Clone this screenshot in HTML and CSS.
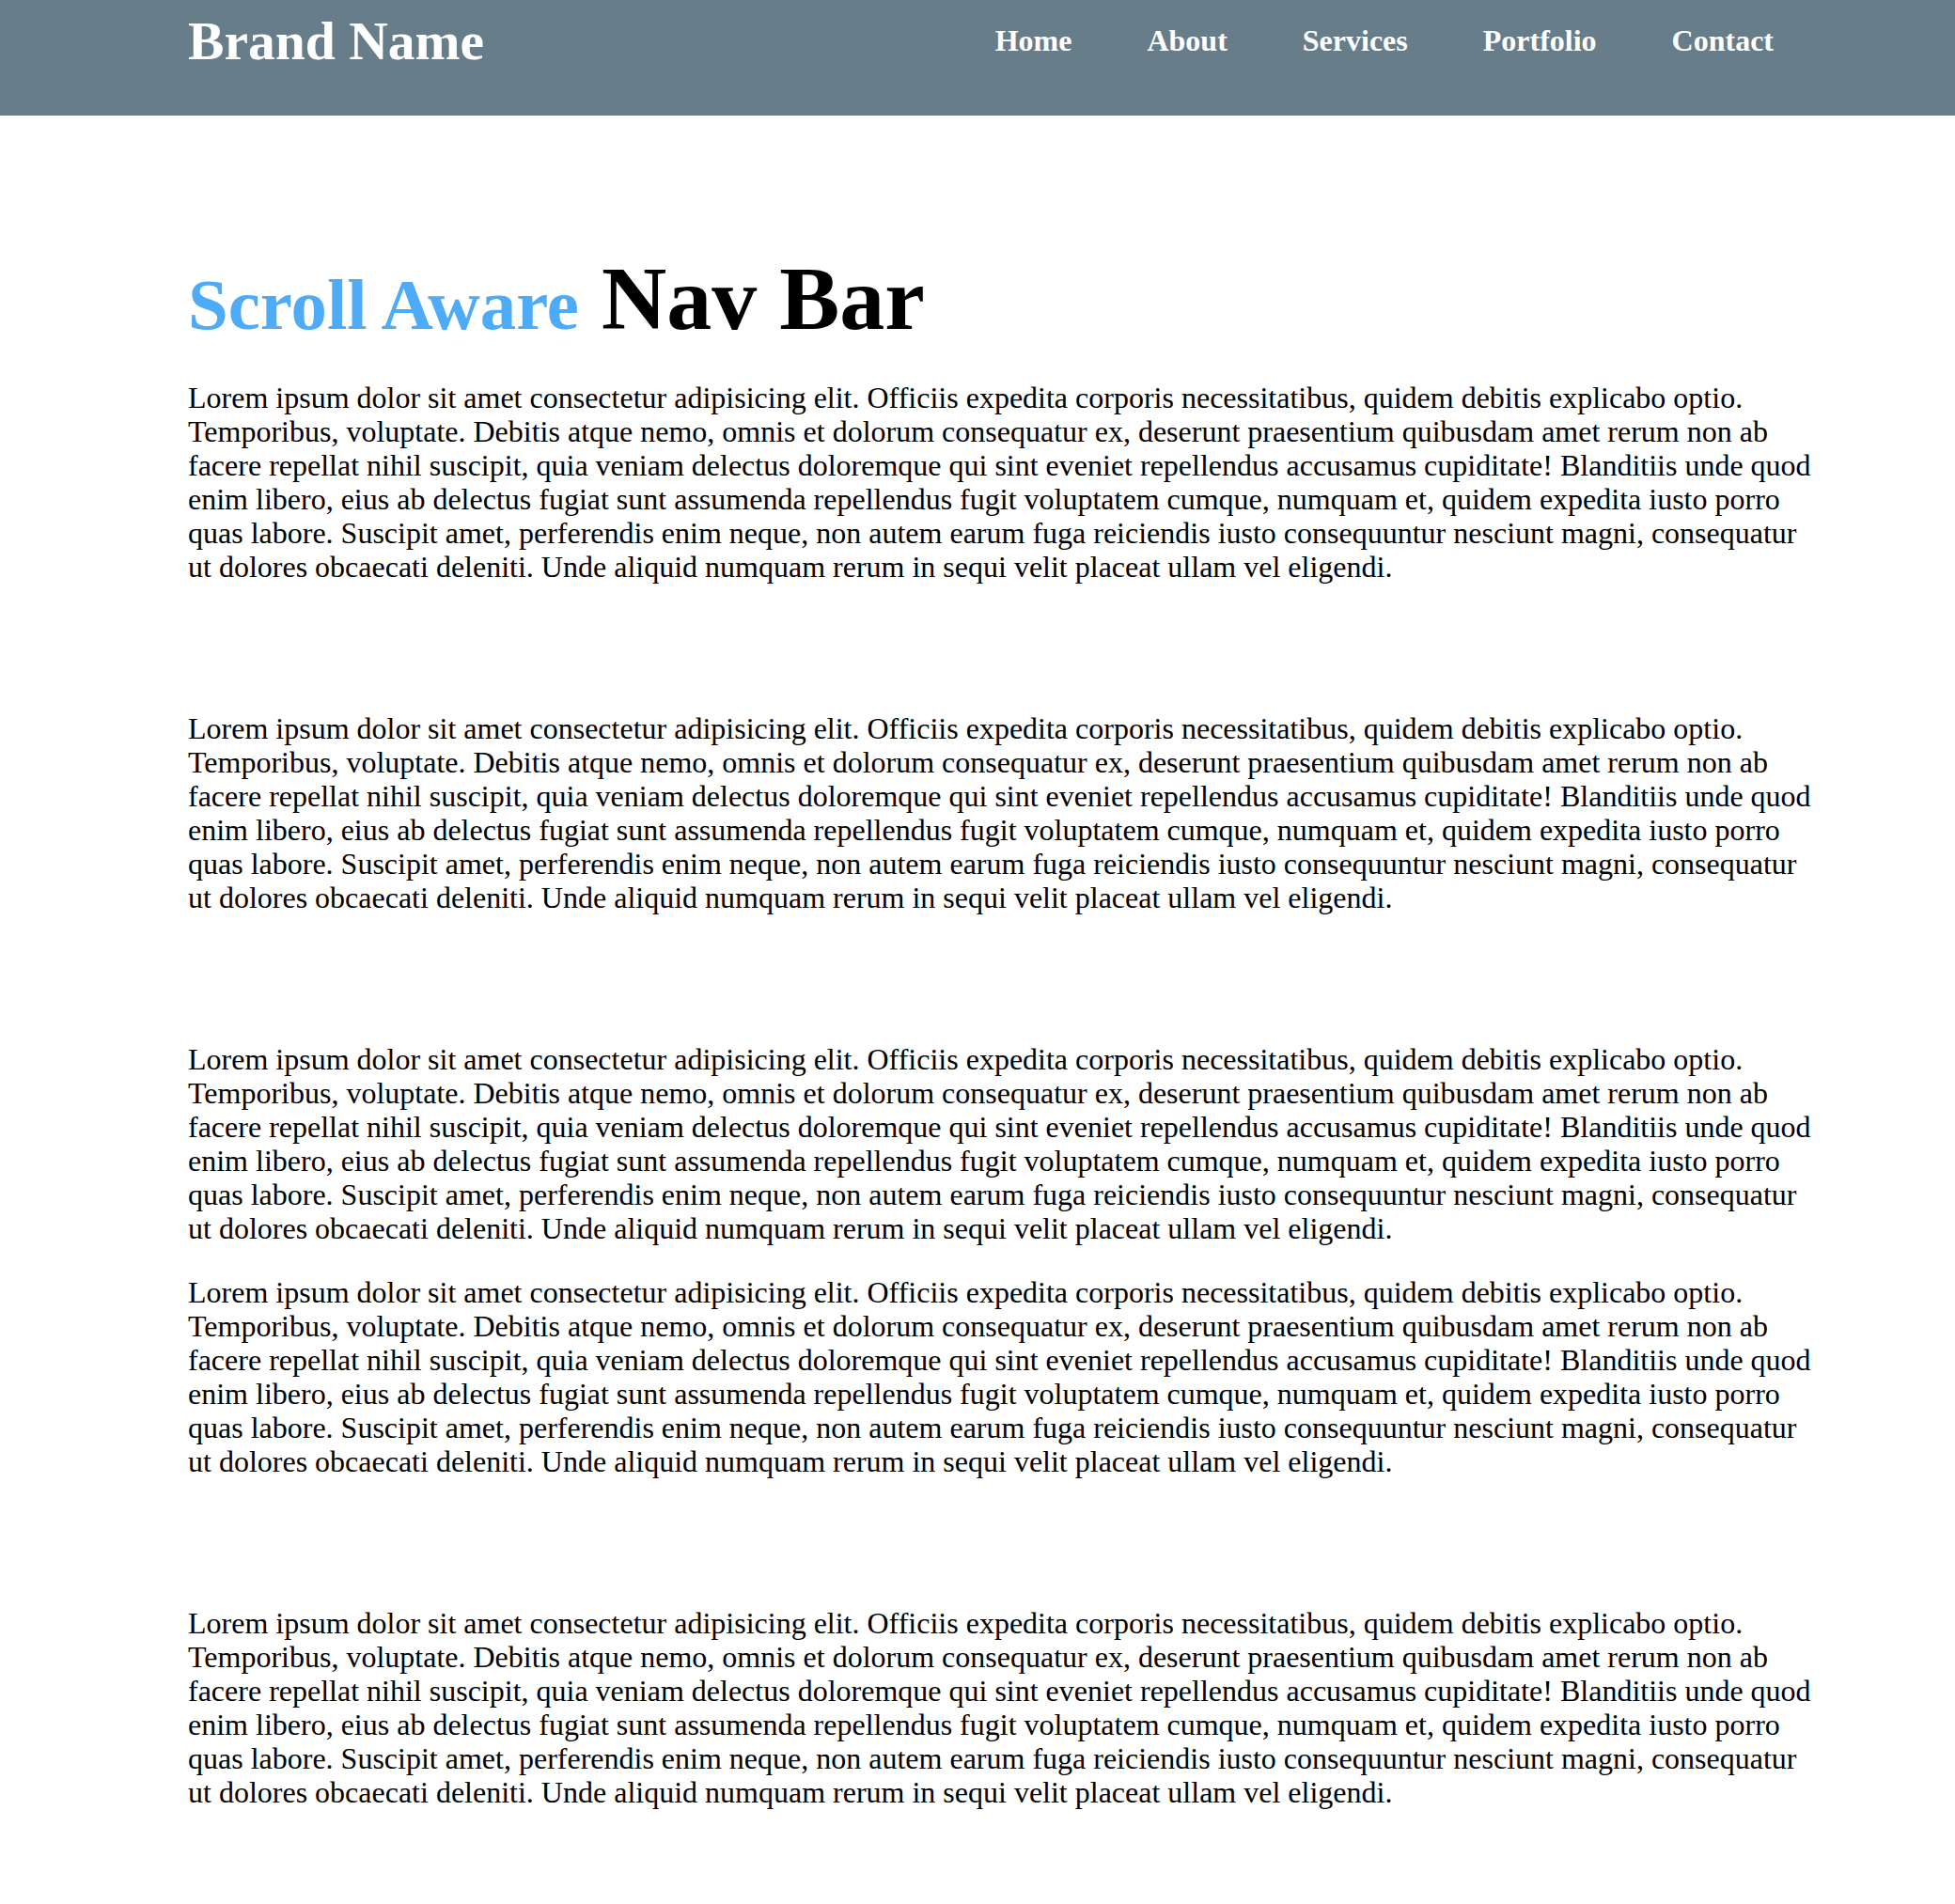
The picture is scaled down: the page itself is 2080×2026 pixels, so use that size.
FILE: index.html
```html
<!DOCTYPE html>
<html lang="en">
<head>
<meta charset="utf-8">
<title>Scroll Aware Nav Bar</title>
<link rel="stylesheet" href="styles.css">
</head>
<body>
<header class="navbar">
  <div class="nav-inner">
    <a class="brand" href="#">Brand Name</a>
    <nav class="nav-links">
      <a href="#">Home</a>
      <a href="#">About</a>
      <a href="#">Services</a>
      <a href="#">Portfolio</a>
      <a href="#">Contact</a>
    </nav>
  </div>
</header>
<main class="content">
  <h1 class="title"><span class="accent">Scroll Aware</span> Nav Bar</h1>
  <p class="para">Lorem ipsum dolor sit amet consectetur adipisicing elit. Officiis expedita corporis necessitatibus, quidem debitis explicabo optio. Temporibus, voluptate. Debitis atque nemo, omnis et dolorum consequatur ex, deserunt praesentium quibusdam amet rerum non ab facere repellat nihil suscipit, quia veniam delectus doloremque qui sint eveniet repellendus accusamus cupiditate! Blanditiis unde quod enim libero, eius ab delectus fugiat sunt assumenda repellendus fugit voluptatem cumque, numquam et, quidem expedita iusto porro quas labore. Suscipit amet, perferendis enim neque, non autem earum fuga reiciendis iusto consequuntur nesciunt magni, consequatur ut dolores obcaecati deleniti. Unde aliquid numquam rerum in sequi velit placeat ullam vel eligendi.</p>
  <p class="para spaced">Lorem ipsum dolor sit amet consectetur adipisicing elit. Officiis expedita corporis necessitatibus, quidem debitis explicabo optio. Temporibus, voluptate. Debitis atque nemo, omnis et dolorum consequatur ex, deserunt praesentium quibusdam amet rerum non ab facere repellat nihil suscipit, quia veniam delectus doloremque qui sint eveniet repellendus accusamus cupiditate! Blanditiis unde quod enim libero, eius ab delectus fugiat sunt assumenda repellendus fugit voluptatem cumque, numquam et, quidem expedita iusto porro quas labore. Suscipit amet, perferendis enim neque, non autem earum fuga reiciendis iusto consequuntur nesciunt magni, consequatur ut dolores obcaecati deleniti. Unde aliquid numquam rerum in sequi velit placeat ullam vel eligendi.</p>
  <p class="para spaced">Lorem ipsum dolor sit amet consectetur adipisicing elit. Officiis expedita corporis necessitatibus, quidem debitis explicabo optio. Temporibus, voluptate. Debitis atque nemo, omnis et dolorum consequatur ex, deserunt praesentium quibusdam amet rerum non ab facere repellat nihil suscipit, quia veniam delectus doloremque qui sint eveniet repellendus accusamus cupiditate! Blanditiis unde quod enim libero, eius ab delectus fugiat sunt assumenda repellendus fugit voluptatem cumque, numquam et, quidem expedita iusto porro quas labore. Suscipit amet, perferendis enim neque, non autem earum fuga reiciendis iusto consequuntur nesciunt magni, consequatur ut dolores obcaecati deleniti. Unde aliquid numquam rerum in sequi velit placeat ullam vel eligendi.</p>
  <p class="para">Lorem ipsum dolor sit amet consectetur adipisicing elit. Officiis expedita corporis necessitatibus, quidem debitis explicabo optio. Temporibus, voluptate. Debitis atque nemo, omnis et dolorum consequatur ex, deserunt praesentium quibusdam amet rerum non ab facere repellat nihil suscipit, quia veniam delectus doloremque qui sint eveniet repellendus accusamus cupiditate! Blanditiis unde quod enim libero, eius ab delectus fugiat sunt assumenda repellendus fugit voluptatem cumque, numquam et, quidem expedita iusto porro quas labore. Suscipit amet, perferendis enim neque, non autem earum fuga reiciendis iusto consequuntur nesciunt magni, consequatur ut dolores obcaecati deleniti. Unde aliquid numquam rerum in sequi velit placeat ullam vel eligendi.</p>
  <p class="para spaced">Lorem ipsum dolor sit amet consectetur adipisicing elit. Officiis expedita corporis necessitatibus, quidem debitis explicabo optio. Temporibus, voluptate. Debitis atque nemo, omnis et dolorum consequatur ex, deserunt praesentium quibusdam amet rerum non ab facere repellat nihil suscipit, quia veniam delectus doloremque qui sint eveniet repellendus accusamus cupiditate! Blanditiis unde quod enim libero, eius ab delectus fugiat sunt assumenda repellendus fugit voluptatem cumque, numquam et, quidem expedita iusto porro quas labore. Suscipit amet, perferendis enim neque, non autem earum fuga reiciendis iusto consequuntur nesciunt magni, consequatur ut dolores obcaecati deleniti. Unde aliquid numquam rerum in sequi velit placeat ullam vel eligendi.</p>
</main>
</body>
</html>
```

FILE: styles.css
```css
html, body {
  margin: 0;
  padding: 0;
  background: #ffffff;
  font-family: "Liberation Serif", "Times New Roman", serif;
  color: #000000;
}

.navbar {
  background: #687d8a;
  height: 123px;
  box-sizing: border-box;
}

.nav-inner {
  display: flex;
  align-items: center;
  justify-content: space-between;
  height: 87px;
  margin-left: 200px;
  width: 1727px;
}

.brand {
  color: #ffffff;
  text-decoration: none;
  font-weight: bold;
  font-size: 57.6px;
}

.nav-links {
  display: flex;
  align-items: center;
}

.nav-links a {
  color: #ffffff;
  text-decoration: none;
  font-weight: bold;
  font-size: 32px;
  padding: 0 40px;
}

.content {
  margin-left: 200px;
  width: 1730px;
  padding-top: 1px;
  padding-bottom: 40px;
}

.title {
  font-size: 96px;
  font-weight: bold;
  margin: 139px 0 0 0;
  line-height: 1.15;
}

.accent {
  color: #4dabf7;
  font-size: 0.8em;
}

.para {
  font-size: 32px;
  line-height: 36px;
  margin: 32px 0;
}

.spaced {
  margin-top: 136px;
}
```
